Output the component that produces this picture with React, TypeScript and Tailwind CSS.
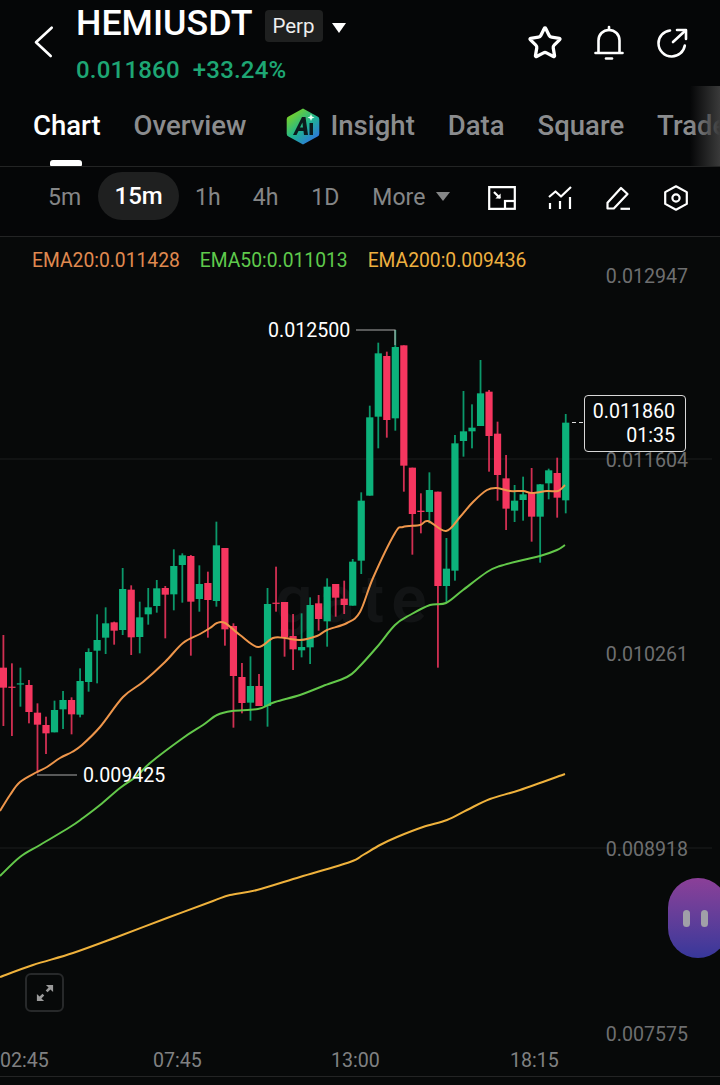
import { Star } from "lucide-react";

type Candle = [number, number, number, number, "g" | "r"];
type Point = [number, number];

// wick top, wick bottom, body top, body bottom, read off the 3x crops
const groupA: Candle[] = [
  [405, 678, 503, 563, "r"], [490, 708, 560, 563, "r"], [503, 620, 550, 553, "g"], [540, 670, 555, 636, "r"],
  [610, 820, 638, 674, "r"], [650, 762, 675, 700, "r"], [602, 697, 630, 697, "g"], [573, 687, 600, 628, "g"],
  [592, 703, 600, 643, "r"], [505, 652, 543, 644, "g"], [445, 575, 456, 546, "g"], [343, 550, 420, 452, "g"],
  [322, 462, 370, 413, "g"], [365, 434, 367, 392, "r"], [204, 405, 267, 390, "g"], [256, 465, 269, 412, "r"],
  [305, 460, 352, 411, "g"], [264, 374, 322, 343, "g"], [240, 338, 265, 318, "g"], [258, 415, 264, 284, "r"],
  [148, 331, 198, 283, "g"], [160, 308, 166, 195, "g"], [165, 467, 168, 305, "r"], [196, 335, 252, 297, "g"],
  [215, 413, 249, 300, "r"], [65, 320, 136, 303, "g"], [144, 437, 144, 388, "r"], [370, 683, 378, 528, "r"],
  [489, 640, 531, 609, "r"], [469, 662, 558, 608, "g"], [522, 618, 558, 618, "r"], [264, 680, 312, 618, "g"],
  [200, 335, 308, 311, "r"], [306, 470, 306, 412, "r"], [342, 510, 408, 448, "r"],
];
const groupB: Candle[] = [
  [400, 532, 501, 511, "g"], [352, 552, 375, 502, "g"], [345, 452, 370, 417, "r"], [295, 500, 320, 424, "g"],
  [312, 410, 312, 353, "r"],
];
const groupC: Candle[] = [
  [812, 912, 866, 885, "r"], [747, 887, 755, 887, "g"], [547, 792, 572, 752, "g"], [287, 557, 322, 557, "g"],
  [98, 415, 130, 320, "g"], [125, 383, 138, 330, "r"], [60, 362, 111, 325, "g"], [106, 545, 106, 467, "r"],
  [473, 734, 473, 612, "r"], [550, 670, 602, 606, "r"], [487, 640, 540, 606, "g"], [545, 1073, 545, 828, "r"],
  [684, 878, 776, 828, "g"], [375, 812, 400, 782, "g"], [243, 440, 364, 393, "g"], [283, 415, 353, 364, "g"],
  [150, 348, 250, 348, "g"], [240, 485, 245, 378, "r"], [335, 572, 371, 495, "r"], [435, 660, 505, 596, "r"],
  [525, 636, 572, 602, "g"], [500, 632, 553, 570, "g"], [474, 695, 548, 620, "r"], [522, 758, 523, 620, "g"],
  [476, 568, 481, 520, "g"], [443, 623, 489, 563, "r"], [312, 610, 338, 571, "g"],
];

const toPage = (group: Candle[], base: number) =>
  group.map(([a, b, c, d, tone]) => [base + a / 3, base + b / 3, base + c / 3, base + d / 3, tone] as const);

const candles = [...toPage(groupA, 500), ...toPage(groupB, 480), ...toPage(groupC, 310)];

const ema20: Point[] = [
  [0, 811], [10, 795], [20, 782], [37, 772], [47, 767], [60, 758], [72, 752], [82, 745], [100, 727], [123, 697],
  [143, 682], [165, 662], [183, 643], [200, 634], [210, 628], [217, 623], [225, 623], [240, 635], [258, 647],
  [273, 638], [285, 638], [300, 640], [317, 636], [327, 630], [347, 623], [360, 612], [373, 578], [395, 533],
  [403, 527], [420, 525], [428, 521], [446, 531], [460, 517], [473, 502], [487, 490], [497, 488], [510, 491],
  [523, 491], [532, 493], [547, 491], [558, 491], [565, 485],
];
const ema50: Point[] = [
  [0, 876], [20, 857], [40, 845], [70, 827], [83, 818], [100, 805], [120, 788], [137, 776], [150, 763], [183, 738],
  [203, 725], [217, 715], [232, 711], [258, 709], [275, 702], [300, 695], [323, 686], [347, 677], [358, 668],
  [377, 647], [395, 625], [410, 615], [430, 605], [446, 603], [463, 590], [487, 572], [500, 566], [523, 560],
  [540, 556], [557, 550], [565, 545],
];
const ema200: Point[] = [
  [0, 977], [33, 965], [73, 953], [117, 937], [167, 918], [213, 901], [230, 895], [257, 890], [300, 877], [350, 862],
  [363, 855], [380, 845], [397, 837], [423, 827], [447, 820], [467, 810], [490, 799], [520, 790], [565, 774],
];

// catmull-rom through the points so the averages don't look kinked
function smoothPath(points: Point[]) {
  let d = `M${points[0][0]} ${points[0][1]}`;
  for (let i = 0; i < points.length - 1; i++) {
    const p0 = points[Math.max(i - 1, 0)];
    const p1 = points[i];
    const p2 = points[i + 1];
    const p3 = points[Math.min(i + 2, points.length - 1)];
    const c1x = p1[0] + (p2[0] - p0[0]) / 6;
    const c1y = p1[1] + (p2[1] - p0[1]) / 6;
    const c2x = p2[0] - (p3[0] - p1[0]) / 6;
    const c2y = p2[1] - (p3[1] - p1[1]) / 6;
    d += ` C${c1x} ${c1y} ${c2x} ${c2y} ${p2[0]} ${p2[1]}`;
  }
  return d;
}

function CandleChart() {
  return (
    <svg viewBox="0 237 720 848" className="absolute inset-0 h-[848px] w-[720px]">
      <line x1="0" x2="712" y1="459" y2="459" stroke="#1d1e1e" />
      <line x1="0" x2="712" y1="848" y2="848" stroke="#1d1e1e" />
      <line x1="0" x2="720" y1="1076.5" y2="1076.5" stroke="#232424" />
      {candles.map(([wickTop, wickBottom, bodyTop, bodyBottom, tone], i) => {
        const x = 3.4 + 8.52 * i;
        const fill = tone === "g" ? "#0cb27b" : "#f5365f";
        return (
          <g key={i} fill={fill}>
            <rect x={x - 0.9} y={wickTop} width="1.8" height={wickBottom - wickTop} opacity="0.85" />
            <rect x={x - 3.6} y={bodyTop} width="7.2" height={Math.max(bodyBottom - bodyTop, 1.2)} />
          </g>
        );
      })}
      <path d={smoothPath(ema200)} fill="none" stroke="#efb23c" strokeWidth="2" />
      <path d={smoothPath(ema50)} fill="none" stroke="#63c84a" strokeWidth="2" />
      <path d={smoothPath(ema20)} fill="none" stroke="#ee964b" strokeWidth="2" />
      <polyline points="356,330 395,330 395,345" fill="none" stroke="#a9a9a9" strokeWidth="1.2" />
      <line x1="37" x2="77" y1="775" y2="775" stroke="#a9a9a9" strokeWidth="1.2" />
      <line x1="572" x2="584" y1="422.5" y2="422.5" stroke="#ddd" strokeDasharray="4 3" />
    </svg>
  );
}

function BackIcon() {
  return (
    <svg viewBox="0 0 20 34" className="h-[34px] w-5" fill="none" stroke="white" strokeWidth="2.6" strokeLinecap="round" strokeLinejoin="round">
      <path d="M17.7 2.7 2 17.3 16.7 31" />
    </svg>
  );
}

function BellIcon() {
  return (
    <svg viewBox="0 0 30 36" className="h-9 w-[30px]" fill="none" stroke="white" strokeWidth="2.6" strokeLinecap="round">
      <path d="M15 2v3" />
      <path d="M4.5 27V15.5C4.5 9.5 9 5 15 5s10.5 4.5 10.5 10.5V27" strokeLinejoin="round" />
      <path d="M1.5 28h27" />
      <path d="M12 33.5h6" />
    </svg>
  );
}

function ShareIcon() {
  return (
    <svg viewBox="0 0 32 32" className="h-8 w-8" fill="none" stroke="white" strokeWidth="2.6" strokeLinecap="round" strokeLinejoin="round">
      <path d="M14 3.5C7.6 4.2 2.5 9.6 2.5 16.2 2.5 23.5 8.4 29.5 15.8 29.5c6.6 0 12-4.8 13-11" />
      <path d="M17 15 29.5 3.5" />
      <path d="M21 3h9v9" />
    </svg>
  );
}

function InsightLogo() {
  return (
    <svg viewBox="0 0 34 37" className="h-[37px] w-[34px]">
      <defs>
        <linearGradient id="insightHex" x1="0.1" y1="0.1" x2="0.8" y2="1">
          <stop offset="0" stopColor="#7ed321" />
          <stop offset="0.5" stopColor="#1fb58f" />
          <stop offset="1" stopColor="#2f6fe8" />
        </linearGradient>
      </defs>
      <path d="M17 0.5 31.5 8.5a3 3 0 0 1 1.8 2.8v14.4a3 3 0 0 1-1.8 2.8L17 36.5 2.5 28.5a3 3 0 0 1-1.8-2.8V11.3a3 3 0 0 1 1.8-2.8Z" fill="url(#insightHex)" />
      <path d="M7 27 16 9h3.5l2.5 18h-4l-.5-4h-5l-2 4Z M14 19.5h3l-.6-5Z" fill="#0b1a1d" fillRule="evenodd" />
      <rect x="23.5" y="15" width="3.5" height="12" fill="#0b1a1d" />
      <path d="M25 6l1 2.5 2.5 1-2.5 1-1 2.5-1-2.5-2.5-1 2.5-1Z" fill="#e9fff4" />
    </svg>
  );
}

function RangeIcon() {
  return (
    <svg viewBox="0 0 28 24" className="h-6 w-7" fill="none" stroke="white" strokeWidth="2.2">
      <path d="M17 22.8H1.2V1.2h25.6V14" />
      <rect x="17" y="15" width="9.8" height="7.8" />
      <path d="M6 6l6 6" />
      <path d="M12.6 12.6H7.4l5.2-5.2Z" fill="white" stroke="none" />
    </svg>
  );
}

function IndicatorIcon() {
  return (
    <svg viewBox="0 0 24 24" className="h-6 w-6" fill="none" stroke="white" strokeWidth="2.2">
      <path d="M1 11 7.5 5.5 13 10.5 23 1" strokeLinejoin="round" />
      <path d="M2 17v6M12 15v8M22 11v12" />
    </svg>
  );
}

function PenIcon() {
  return (
    <svg viewBox="0 0 24 24" className="h-6 w-6" fill="none" stroke="white" strokeWidth="2.2" strokeLinejoin="round">
      <path d="M1.5 22.5v-5.7L15 2l6.5 6-13.7 14.5Z" />
      <path d="M14.5 22.8H24" />
    </svg>
  );
}

function SettingsIcon() {
  return (
    <svg viewBox="0 0 24 26" className="h-[26px] w-6" fill="none" stroke="white" strokeWidth="2.2" strokeLinejoin="round">
      <path d="M12 1.3 22.8 7.1v11.8L12 24.7 1.2 18.9V7.1Z" />
      <circle cx="12" cy="13" r="3.6" />
    </svg>
  );
}

function ExpandIcon() {
  return (
    <svg viewBox="0 0 20 20" className="h-[18px] w-[18px]" fill="#9a9a9a">
      <path d="M11 1h8v8l-3-3-3.2 3.2-2-2L14 4Z" />
      <path d="M9 19H1v-8l3 3 3.2-3.2 2 2L6 16Z" />
    </svg>
  );
}

export default function App() {
  return (
    <div className="flex h-[1085px] w-[720px] flex-col overflow-hidden bg-[#050607] font-['Roboto',sans-serif] text-white">
      <header className="flex h-[86px] shrink-0">
        <div className="flex w-[76px] items-start pl-[34px] pt-[25px]">
          <BackIcon />
        </div>
        <div className="flex flex-col">
          <div className="flex h-[48px] items-center">
            <span className="text-[35.8px] font-medium leading-none">HEMIUSDT</span>
            <span className="ml-[12px] mt-[4px] flex h-8 w-[58px] items-center justify-center rounded-[4px] bg-[#1f2020] text-[20.5px] text-[#eeeeee]">
              Perp
            </span>
            <span className="ml-[9px] mt-[8px] h-0 w-0 border-x-[7px] border-t-[10px] border-x-transparent border-t-white" />
          </div>
          <div className="mt-[10px] flex items-center gap-[13px] text-[24px] font-medium leading-none tracking-[0.2px] text-[#1ea674]">
            <span>0.011860</span>
            <span>+33.24%</span>
          </div>
        </div>
        <div className="ml-auto flex h-[86px] items-center gap-[32px] pr-[32px]">
          <Star className="mr-[-1px] h-9 w-9" strokeWidth={2.2} />
          <BellIcon />
          <ShareIcon />
        </div>
      </header>

      <nav className="relative flex h-[81px] shrink-0 items-center gap-[33px] border-b border-[#232424] pl-[33px] text-[27.5px] font-medium whitespace-nowrap text-[#8b8c8e]">
        <span className="text-white">Chart</span>
        <span>Overview</span>
        <span className="ml-[6px] flex items-center gap-[11px]">
          <InsightLogo />
          Insight
        </span>
        <span>Data</span>
        <span>Square</span>
        <span>Trade</span>
        <span className="absolute bottom-0 left-[50px] h-[6px] w-[32px] rounded-t-[3px] rounded-b-[1px] bg-white" />
        <span className="absolute right-0 top-0 h-full w-[30px] bg-gradient-to-r from-transparent to-[#3a3a3a]" />
      </nav>

      <div className="flex h-[70px] shrink-0 items-center border-b border-[#232424] pb-[12px] pl-[48px] text-[23px] text-[#858687]">
        <span className="mt-[6px]">5m</span>
        <span className="ml-[17px] flex h-[48px] w-[81px] items-center justify-center rounded-full bg-[#1f2020] text-[24px] font-medium text-white">
          15m
        </span>
        <span className="ml-[16px] mt-[6px]">1h</span>
        <span className="ml-[32px] mt-[6px]">4h</span>
        <span className="ml-[33px] mt-[6px]">1D</span>
        <span className="ml-[33px] mt-[6px]">More</span>
        <span className="ml-[11px] mt-[1px] h-0 w-0 border-x-[7px] border-t-[9px] border-x-transparent border-t-[#858687]" />
        <div className="ml-[38px] mt-[4px] flex items-center gap-[34px]">
          <span className="mr-[-2px]">
            <RangeIcon />
          </span>
          <IndicatorIcon />
          <PenIcon />
          <SettingsIcon />
        </div>
      </div>

      <main className="relative flex-1 bg-[#070909] text-[19.6px]">
        <div className="absolute left-[275px] top-[330px] text-[66px] font-semibold leading-none tracking-[7px] text-[#121415]">gate</div>
        <CandleChart />
        <div className="relative flex gap-[20px] pl-[32px] pt-[13px] text-[19.3px] leading-[22px]">
          <span className="text-[#e08a50]">EMA20:0.011428</span>
          <span className="text-[#5fca4c]">EMA50:0.011013</span>
          <span className="text-[#eeb040]">EMA200:0.009436</span>
        </div>

        <span className="absolute right-[32px] top-[29px] leading-[22px] text-[#6e6f70]">0.012947</span>
        <span className="absolute right-[32px] top-[213px] leading-[22px] text-[#6e6f70]">0.011604</span>
        <span className="absolute right-[32px] top-[407px] leading-[22px] text-[#6e6f70]">0.010261</span>
        <span className="absolute right-[32px] top-[602px] leading-[22px] text-[#6e6f70]">0.008918</span>
        <span className="absolute right-[32px] top-[787px] leading-[22px] text-[#6e6f70]">0.007575</span>

        <span className="absolute left-0 top-[813px] leading-[22px] text-[#808182]">02:45</span>
        <span className="absolute left-[153px] top-[813px] leading-[22px] text-[#808182]">07:45</span>
        <span className="absolute left-[331px] top-[813px] leading-[22px] text-[#808182]">13:00</span>
        <span className="absolute left-[510px] top-[813px] leading-[22px] text-[#808182]">18:15</span>

        <span className="absolute left-[268px] top-[83px] leading-[22px] text-white">0.012500</span>
        <span className="absolute left-[83px] top-[528px] leading-[22px] text-white">0.009425</span>

        <div className="absolute left-[584px] top-[158px] flex h-[57px] w-[102px] flex-col items-end justify-center rounded-[4px] border border-[#d8d8d8] bg-[#070909] pr-[10px] leading-[24px]">
          <span>0.011860</span>
          <span>01:35</span>
        </div>

        <div className="absolute left-[25px] top-[736px] flex h-[39px] w-[39px] items-center justify-center rounded-[6px] border-2 border-[#27292a]">
          <ExpandIcon />
        </div>

        <div className="absolute left-[668px] top-[641px] flex h-[80px] w-[60px] items-center gap-[11px] rounded-[30px] bg-gradient-to-b from-[#8b3f98] to-[#37379a] pl-[15px]">
          <span className="h-[17px] w-[7px] rounded-full bg-[#a0a0a8]" />
          <span className="h-[17px] w-[7px] rounded-full bg-[#a0a0a8]" />
        </div>
      </main>
    </div>
  );
}
